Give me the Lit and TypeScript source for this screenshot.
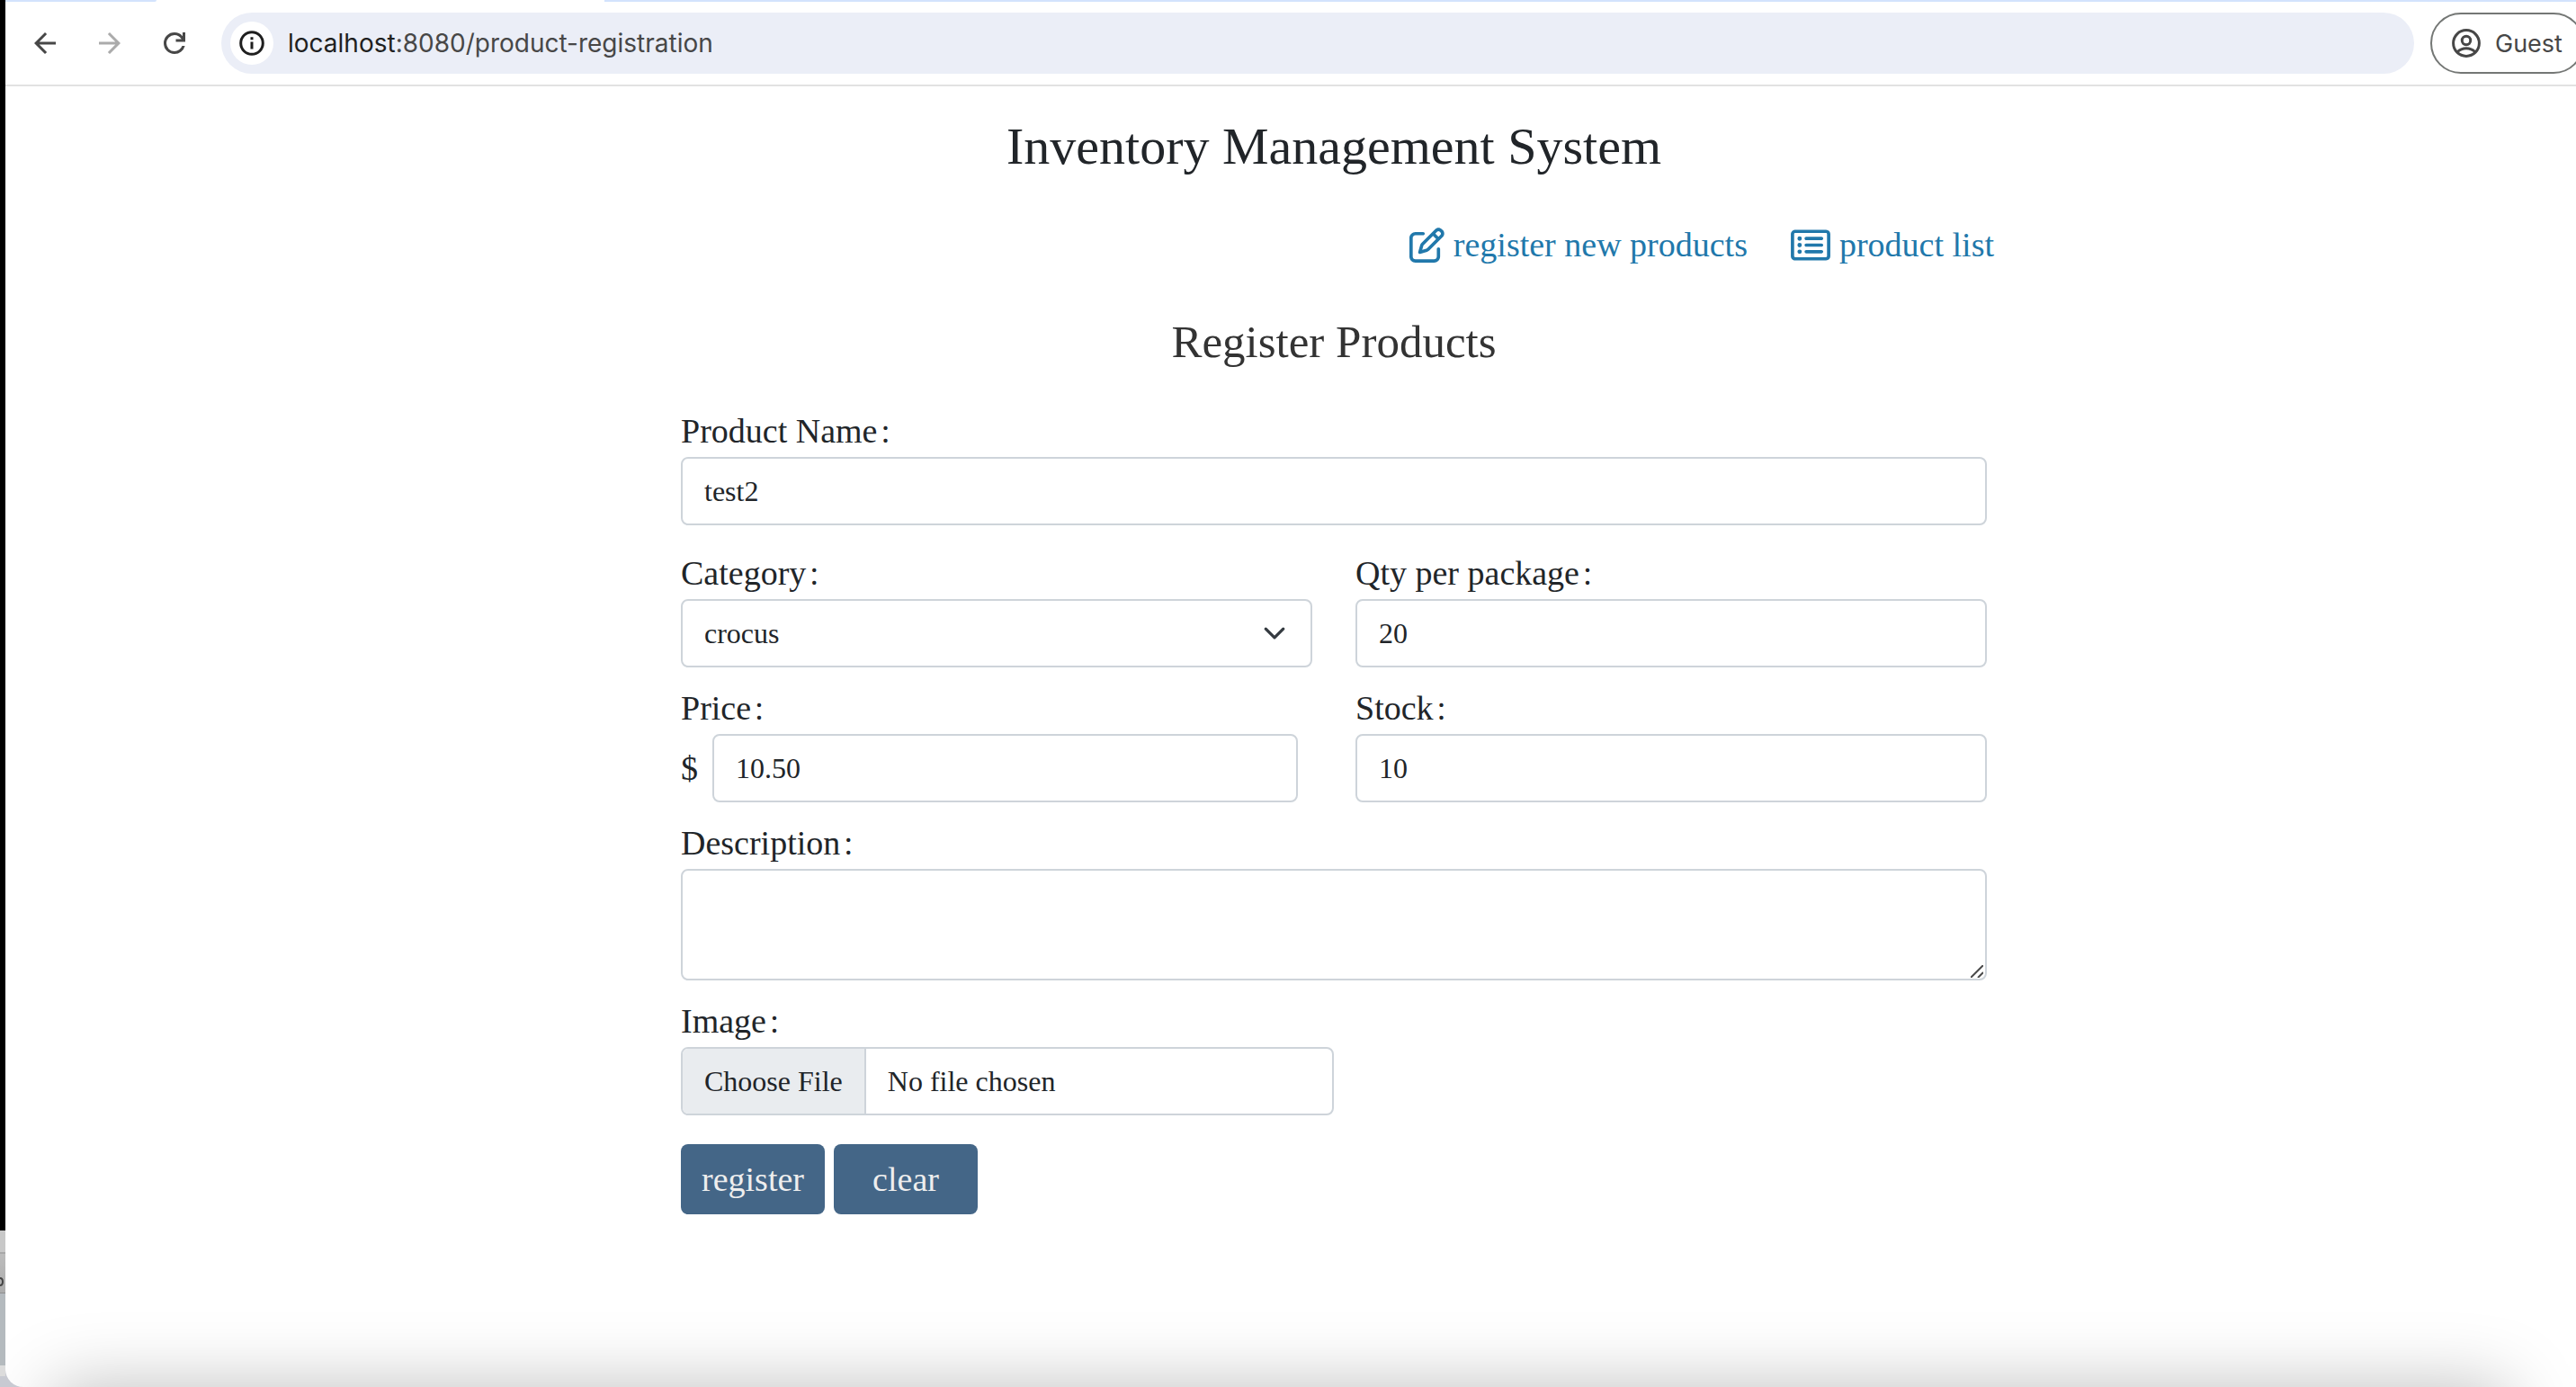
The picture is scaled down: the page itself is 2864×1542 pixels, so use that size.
import { LitElement, html, css } from "lit";
import { customElement, state } from "lit/decorators.js";

@customElement("browser-toolbar")
class BrowserToolbar extends LitElement {
  static styles = css`
    :host { display: block; font-family: Inter, "Liberation Sans", sans-serif; font-size: 28px; color: #474747; }
    .strip { height: 2px; display: flex; justify-content: flex-start; background: #fff; }
    .strip-left { width: 168px; background: #d3e3fd; border-bottom-right-radius: 2px; }
    .strip-gap { width: 498px; background: #fff; }
    .strip-rest { flex: 1; background: #d3e3fd; }
    .bar { display: flex; align-items: center; height: 92px; border-bottom: 2px solid #e2e2e2; box-sizing: content-box; padding-left: 20px; }
    button { font: inherit; color: inherit; background: none; border: 0; padding: 0; margin: 0; }
    svg { display: block; }
    .tool { width: 48px; height: 48px; display: grid; place-items: center; margin-right: 24px; flex: none; }
    .tool:disabled { color: #ababab; }
    .address { flex: 1; height: 68px; margin-left: 4px; border-radius: 34px; background: #ebeef7; display: flex; align-items: center; padding: 0 10px; gap: 16px; }
    .info { width: 48px; height: 48px; border-radius: 24px; background: #fff; display: grid; place-items: center; color: #1f1f1f; flex: none; }
    .url { flex: 1; }
    .host { color: #1f1f1f; }
    .guest { display: flex; align-items: center; gap: 16px; width: 171px; height: 68px; margin: 0 -9px 0 18px; padding-left: 22px; border: 2px solid #747775; border-radius: 34px; box-sizing: border-box; flex: none; font-size: 27px; }
  `;

  render() {
    return html`
      <div class="strip"><span class="strip-left"></span><span class="strip-gap"></span><span class="strip-rest"></span></div>
      <div class="bar">
        <button class="tool" aria-label="Back">
          <svg width="24" height="24" viewBox="4 4 16 16" fill="currentColor"><path d="M7.825 13l5.600 5.600L12 20l-8-8 8-8 1.425 1.400L7.825 11H20v2z"/></svg>
        </button>
        <button class="tool" aria-label="Forward" disabled>
          <svg width="24" height="24" viewBox="4 4 16 16" fill="currentColor"><path d="M16.175 13H4v-2h12.175l-5.600-5.600L12 4l8 8-8 8-1.425-1.400z"/></svg>
        </button>
        <button class="tool" aria-label="Reload">
          <svg width="24" height="24" viewBox="4 4 16 16" fill="currentColor"><path d="M12 20q-3.350 0-5.675-2.325T4 12t2.325-5.675T12 4q1.725 0 3.300.713T18 6.750V4h2v7h-7V9h4.200q-.8-1.400-2.188-2.200T12 6Q9.500 6 7.750 7.750T6 12t1.750 4.250T12 18q1.925 0 3.475-1.100T17.650 14h2.100q-.7 2.650-2.850 4.325T12 20z"/></svg>
        </button>
        <div class="address">
          <button class="info" aria-label="Site information">
            <svg width="28" height="28" viewBox="0 0 28 28" fill="none" stroke="currentColor" stroke-width="3"><circle cx="14" cy="14" r="12.300"/><path d="M14 12.500v8M14 7.200v3"/></svg>
          </button>
          <span class="url"><span class="host">localhost</span>:8080/product-registration</span>
        </div>
        <button class="guest">
          <svg width="32" height="32" viewBox="0 0 32 32" fill="none" stroke="currentColor" stroke-width="3"><circle cx="16" cy="16" r="14.400"/><circle cx="16" cy="13" r="4.700"/><path d="M6 26c5.500-5.600 14.500-5.600 20 0"/></svg>
          Guest
        </button>
      </div>
    `;
  }
}

@customElement("product-form")
class ProductForm extends LitElement {
  static styles = css`
    :host { display: block; }
    form { display: grid; grid-template-columns: 1fr 1fr; column-gap: 48px; row-gap: 16px; margin: 0; }
    .field { display: flex; flex-direction: column; min-width: 0; }
    .wide { grid-column: 1 / -1; }
    .first { margin-bottom: 8px; }
    label, .unit { font-size: 38px; line-height: 58px; }
    label { align-self: flex-start; }
    .colon { font-family: "Noto Sans CJK SC", sans-serif; font-size: 28px; line-height: 28px; margin-left: 2px; }
    .control { box-sizing: border-box; width: 100%; height: 76px; margin: 0; padding: 12px 24px; border: 2px solid #ced4da; border-radius: 8px; background: #fff; color: #212529; font-family: inherit; font-size: 32px; line-height: 48px; outline: none; }
    .stack { position: relative; }
    .stack .control { appearance: none; display: block; }
    .area { height: 124px; resize: vertical; }
    .area::-webkit-resizer { background: transparent; }
    .grip { position: absolute; right: 4px; bottom: 3px; pointer-events: none; }
    .chevron { position: absolute; right: 29px; top: 25px; pointer-events: none; }
    .price { display: flex; align-items: center; gap: 16px; padding-right: 16px; }
    .file { width: 50%; overflow: hidden; }
    .file::file-selector-button { height: 72px; margin: -12px 24px -12px -24px; padding: 0 24px; border: 0; border-right: 2px solid #ced4da; border-radius: 0; background: #e9ecef; color: #212529; font: inherit; line-height: 72px; }
    .actions { display: flex; gap: 10px; margin-top: 16px; }
    .action { width: 160px; height: 78px; padding: 0; border: 0; border-radius: 8px; background: #446687; color: #eee; font-family: inherit; font-size: 38px; line-height: 58px; }
  `;

  @state() private categories = ["crocus"];

  private label(id: string, text: string) {
    return html`<label for=${id}>${text}<span class="colon">：</span></label>`;
  }

  render() {
    return html`
      <form @submit=${(e: Event) => e.preventDefault()}>
        <div class="field wide first">
          ${this.label("name", "Product Name")}
          <input id="name" class="control" type="text" value="test2" />
        </div>
        <div class="field">
          ${this.label("category", "Category")}
          <div class="stack">
            <select id="category" class="control">
              ${this.categories.map((c) => html`<option>${c}</option>`)}
            </select>
            <svg class="chevron" width="26" height="26" viewBox="0 0 16 16" fill="none" stroke="#343a40" stroke-width="2" stroke-linecap="round" stroke-linejoin="round"><path d="M2 5l6 6 6-6"/></svg>
          </div>
        </div>
        <div class="field">
          ${this.label("qty", "Qty per package")}
          <input id="qty" class="control" type="text" inputmode="numeric" value="20" />
        </div>
        <div class="field">
          ${this.label("price", "Price")}
          <div class="price">
            <span class="unit">$</span>
            <input id="price" class="control" type="text" inputmode="decimal" value="10.50" />
          </div>
        </div>
        <div class="field">
          ${this.label("stock", "Stock")}
          <input id="stock" class="control" type="text" inputmode="numeric" value="10" />
        </div>
        <div class="field wide">
          ${this.label("description", "Description")}
          <div class="stack">
            <textarea id="description" class="control area"></textarea>
            <svg class="grip" width="14" height="14" viewBox="0 0 14 14" fill="none" stroke="#4a4a4a" stroke-width="2"><path d="M0 14 14 0M8 14l6-6"/></svg>
          </div>
        </div>
        <div class="field wide">
          ${this.label("image", "Image")}
          <input id="image" class="control file" type="file" />
        </div>
        <div class="actions wide">
          <button class="action" type="submit">register</button>
          <button class="action" type="reset">clear</button>
        </div>
      </form>
    `;
  }
}

@customElement("app-root")
class AppRoot extends LitElement {
  static styles = css`
    :host { display: block; }
    .desktop { display: flex; box-sizing: border-box; min-height: 100vh; overflow: hidden; background: #c8cad2; }
    .backdrop { width: 6px; flex: none; display: flex; flex-direction: column; }
    .dark { flex: 1; background: #000; }
    .panel { height: 70px; box-sizing: border-box; padding-top: 52px; border-bottom: 1px solid #8e8e8e; background: linear-gradient(#c8c8c8 24px, #a8a8a8 24px, #a8a8a8 26px, #bcbcbc 26px, #acacac); }
    .panel svg { display: block; }
    .pane { height: 80px; background: #b4babe; }
    .edge { height: 24px; background: linear-gradient(#dcdcdc 12px, #c8cad2 12px); }
    .window { flex: 1; min-width: 0; display: flex; flex-direction: column; background: #fff; border-bottom-left-radius: 20px; overflow: hidden; position: relative; }
    .shade { position: absolute; left: 52px; right: 76px; bottom: -100px; height: 100px; box-shadow: 0 0 80px rgba(0, 0, 0, 0.26); pointer-events: none; }
    .body { padding-left: 96px; }
    .page { width: 1452px; max-width: 100%; box-sizing: border-box; margin: 0 auto; color: #212529; font-family: "Liberation Serif", serif; }
    h1 { margin: 32px 0 0; font-size: 58px; line-height: 70px; font-weight: 400; text-align: center; }
    nav { display: flex; justify-content: flex-end; gap: 48px; margin: 45px -8px 0 0; }
    a { display: flex; align-items: center; gap: 10px; color: #2178ab; font-size: 38px; line-height: 58px; text-decoration: none; }
    a svg { display: block; fill: currentColor; }
    h2 { margin: 48px 0 0; font-size: 51px; line-height: 62px; font-weight: 400; text-align: center; color: #333; }
    product-form { margin-top: 39px; }
  `;

  render() {
    return html`
      <div class="desktop">
        <div class="backdrop" aria-hidden="true">
          <span class="dark"></span>
          <span class="panel"><svg width="6" height="10" viewBox="0 0 6 10" fill="none" stroke="#444" stroke-width="2"><path d="M0 1c4 0 4 8 0 8"/></svg></span>
          <span class="pane"></span>
          <span class="edge"></span>
        </div>
        <div class="window">
          <browser-toolbar></browser-toolbar>
          <div class="body">
            <main class="page">
              <h1>Inventory Management System</h1>
              <nav>
                <a href="#register">
                  <svg width="39" height="39" viewBox="0 0 512 512"><path d="M441 58.900L453.100 71c9.400 9.400 9.400 24.600 0 33.900L424 134.100 377.900 88 407 58.900c9.400-9.400 24.600-9.400 33.900 0zM209.800 256.200L344 121.900 390.100 168 255.800 302.200c-2.900 2.900-6.500 5-10.400 6.100l-58.500 16.700 16.700-58.500c1.100-3.900 3.200-7.500 6.100-10.400zM373.100 25L175.800 222.200c-8.700 8.700-15 19.400-18.300 31.100l-28.600 100c-2.400 8.400-.1 17.400 6.100 23.600s15.200 8.500 23.600 6.100l100-28.600c11.800-3.400 22.500-9.700 31.100-18.300L487 138.900c28.100-28.100 28.100-73.700 0-101.800L474.900 25C446.800-3.100 401.200-3.100 373.100 25zM88 64C39.400 64 0 103.400 0 152V424c0 48.600 39.400 88 88 88H360c48.600 0 88-39.400 88-88V312c0-13.300-10.700-24-24-24s-24 10.700-24 24V424c0 22.100-17.900 40-40 40H88c-22.100 0-40-17.900-40-40V152c0-22.100 17.900-40 40-40H200c13.300 0 24-10.700 24-24s-10.700-24-24-24H88z"/></svg>
                  register new products
                </a>
                <a href="#list">
                  <svg width="44" height="39" viewBox="0 0 576 512"><path d="M64 80c-8.800 0-16 7.200-16 16V416c0 8.800 7.200 16 16 16H512c8.800 0 16-7.200 16-16V96c0-8.800-7.200-16-16-16H64zM0 96C0 60.700 28.700 32 64 32H512c35.300 0 64 28.700 64 64V416c0 35.300-28.700 64-64 64H64c-35.300 0-64-28.700-64-64V96zm96 64a32 32 0 1 1 64 0 32 32 0 1 1 -64 0zm104 0c0-13.300 10.700-24 24-24H448c13.300 0 24 10.700 24 24s-10.700 24-24 24H224c-13.300 0-24-10.700-24-24zm0 96c0-13.300 10.700-24 24-24H448c13.300 0 24 10.700 24 24s-10.700 24-24 24H224c-13.300 0-24-10.700-24-24zm0 96c0-13.300 10.700-24 24-24H448c13.300 0 24 10.700 24 24s-10.700 24-24 24H224c-13.300 0-24-10.700-24-24zm-72-64a32 32 0 1 1 0-64 32 32 0 1 1 0 64zM96 352a32 32 0 1 1 64 0 32 32 0 1 1 -64 0z"/></svg>
                  product list
                </a>
              </nav>
              <h2>Register Products</h2>
              <product-form></product-form>
            </main>
          </div>
          <div class="shade"></div>
        </div>
      </div>
    `;
  }
}
